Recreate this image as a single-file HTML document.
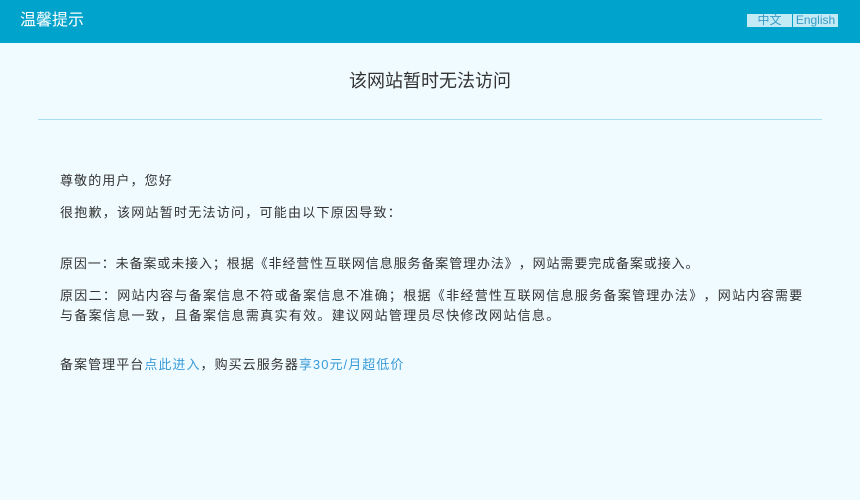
<!DOCTYPE html>
<html><head><meta charset="utf-8"><style>
html,body{margin:0;padding:0}
body{width:860px;height:500px;background:#f0fbff;font-family:"Liberation Sans","Noto Sans CJK SC",sans-serif;color:#333;position:relative;overflow:hidden;text-spacing-trim:space-all}
.hd{position:absolute;left:0;top:0;width:860px;height:43px;background:#00a3cb}
.hd .t{position:absolute;left:20px;top:11px;font-size:16px;color:#fff;line-height:20px}
.lang{position:absolute;top:14px;height:13px;background:#c2ebf6;color:#3a9bc7;font-size:12px;line-height:13px;text-align:center}
h1{position:absolute;left:0;width:860px;top:69px;margin:0;font-size:18px;font-weight:normal;text-align:center;line-height:24px;color:#333}
.line{position:absolute;left:38px;width:784px;top:119px;height:1px;background:#a6e0ee}
p{position:absolute;left:60px;margin:0;font-size:13px;line-height:20px;white-space:nowrap;letter-spacing:0.9px}
a{color:#3a9bd8;text-decoration:none}
</style></head><body>
<div class="hd"><div class="t">温馨提示</div>
<div class="lang" style="left:747px;width:45px">中文</div>
<div class="lang" style="left:793px;width:45px">English</div></div>
<h1>该网站暂时无法访问</h1>
<div class="line"></div>
<p style="top:171px;letter-spacing:1.1px">尊敬的用户，您好</p>
<p style="top:203px;letter-spacing:1.25px">很抱歉，该网站暂时无法访问，可能由以下原因导致：</p>
<p style="top:254px">原因一：未备案或未接入；根据《非经营性互联网信息服务备案管理办法》，网站需要完成备案或接入。</p>
<p style="top:286px;letter-spacing:1.3px">原因二：网站内容与备案信息不符或备案信息不准确；根据《非经营性互联网信息服务备案管理办法》，网站内容需要<br>与备案信息一致，且备案信息需真实有效。建议网站管理员尽快修改网站信息。</p>
<p style="top:355px;letter-spacing:1.05px">备案管理平台<a>点此进入</a>，购买云服务器<a>享30元/月超低价</a></p>
</body></html>
